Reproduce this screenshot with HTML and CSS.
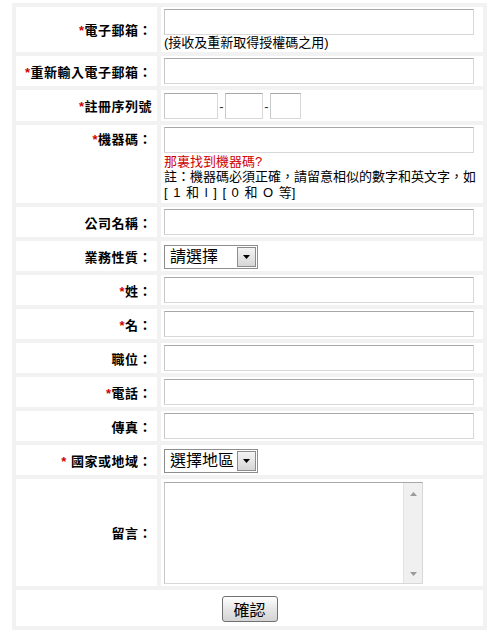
FILE: index.html
```html
<!DOCTYPE html>
<html lang="zh-Hant">
<head>
    <meta charset="UTF-8"/>
    <meta name="viewport" content="width=device-width, initial-scale=1.0"/>
    <title>註冊表格</title>
    <link rel="stylesheet" href="styles.css">
</head>
<body>
    <form id="regForm">
        <table class="form-table">
            <colgroup>
                <col class="col-label">
                <col class="col-field">
            </colgroup>
            <tr class="row-email">
                <td class="label"><span class="req">*</span>電子郵箱：</td>
                <td class="field">
                    <input type="text" class="txt">
                    <div class="hint">(接收及重新取得授權碼之用)</div>
                </td>
            </tr>
            <tr>
                <td class="label"><span class="req">*</span>重新輸入電子郵箱：</td>
                <td class="field"><input type="text" class="txt"></td>
            </tr>
            <tr class="row-serial">
                <td class="label"><span class="req">*</span>註冊序列號</td>
                <td class="field">
                    <div class="serial">
                        <input type="text" class="txt s1">
                        <span class="dash">-</span>
                        <input type="text" class="txt s2">
                        <span class="dash">-</span>
                        <input type="text" class="txt s3">
                    </div>
                </td>
            </tr>
            <tr class="row-machine">
                <td class="label top"><span class="req">*</span>機器碼：</td>
                <td class="field">
                    <input type="text" class="txt">
                    <div class="hint"><a href="#" class="help">那裏找到機器碼?</a></div>
                    <div class="hint note">註：機器碼必須正確，請留意相似的數字和英文字，如<br><span class="pairs">[ 1 和 l ] [ 0 和 O 等]</span></div>
                </td>
            </tr>
            <tr>
                <td class="label">公司名稱：</td>
                <td class="field"><input type="text" class="txt"></td>
            </tr>
            <tr>
                <td class="label">業務性質：</td>
                <td class="field">
                    <div class="dropdown">
                        <select>
                            <option>請選擇</option>
                        </select>
                        <span class="arrow"><svg width="7" height="4" viewBox="0 0 7 4"><path d="M0 0h7L3.5 4z" fill="#000"/></svg></span>
                    </div>
                </td>
            </tr>
            <tr>
                <td class="label"><span class="req">*</span>姓：</td>
                <td class="field"><input type="text" class="txt"></td>
            </tr>
            <tr>
                <td class="label"><span class="req">*</span>名：</td>
                <td class="field"><input type="text" class="txt"></td>
            </tr>
            <tr>
                <td class="label">職位：</td>
                <td class="field"><input type="text" class="txt"></td>
            </tr>
            <tr>
                <td class="label"><span class="req">*</span>電話：</td>
                <td class="field"><input type="text" class="txt"></td>
            </tr>
            <tr>
                <td class="label">傳真：</td>
                <td class="field"><input type="text" class="txt"></td>
            </tr>
            <tr>
                <td class="label"><span class="req">* </span>國家或地域：</td>
                <td class="field">
                    <div class="dropdown">
                        <select>
                            <option>選擇地區</option>
                        </select>
                        <span class="arrow"><svg width="7" height="4" viewBox="0 0 7 4"><path d="M0 0h7L3.5 4z" fill="#000"/></svg></span>
                    </div>
                </td>
            </tr>
            <tr class="row-memo">
                <td class="label">留言：</td>
                <td class="field">
                    <div class="memo">
                        <textarea></textarea>
                        <div class="scroll">
                            <svg width="7" height="4" viewBox="0 0 7 4"><path d="M0 4h7L3.5 0z" fill="#9a9a9a"/></svg>
                            <svg width="7" height="4" viewBox="0 0 7 4"><path d="M0 0h7L3.5 4z" fill="#9a9a9a"/></svg>
                        </div>
                    </div>
                </td>
            </tr>
            <tr class="row-submit">
                <td colspan="2" class="submit"><button type="submit">確認</button></td>
            </tr>
        </table>
    </form>
</body>
</html>
```

FILE: styles.css
```css
body {
    margin: 3px 0 0 12px;
    font-family: "Liberation Sans", "Noto Sans CJK TC", sans-serif;
    font-size: 13px;
    color: #000;
    background: #fff;
}
.form-table {
    width: 475px;
    table-layout: fixed;
    border-spacing: 4px;
    background: #f2f2f2;
}
.col-label {
    width: 141px;
}
.col-field {
    width: 322px;
}
.form-table td {
    background: #fff;
    padding: 2px 3px;
}
.label {
    text-align: right;
    vertical-align: middle;
    font-weight: bold;
    letter-spacing: 0.5px;
    padding: 4px 5px 1px 3px !important;
    white-space: nowrap;
    line-height: 16px;
}
.label.top {
    vertical-align: top;
    padding-top: 7px !important;
}
.req {
    color: #d00000;
}
.field {
    vertical-align: top;
    height: 26px;
}
.txt {
    display: block;
    width: 310px;
    height: 26px;
    box-sizing: border-box;
    border: 1px solid;
    border-color: #a8a8a8 #d8d8d8 #d8d8d8 #c8c8c8;
    margin: 0;
    padding: 2px 4px;
    font-family: inherit;
    font-size: 13px;
}
.row-serial .field {
    padding-top: 3px;
}
.serial {
    display: flex;
    align-items: center;
}
.serial .s1 {
    width: 54px;
}
.serial .s2 {
    width: 38px;
}
.serial .s3 {
    width: 31px;
}
.dash {
    width: 7px;
    text-align: center;
    color: #333;
}
.hint {
    line-height: 15px;
    white-space: nowrap;
}
.help {
    display: block;
    margin-top: 1px;
    color: #d00000;
    text-decoration: none;
}
.note {
    line-height: 16px;
}
.pairs {
    word-spacing: 2px;
}
.dropdown {
    position: relative;
    width: 94px;
    height: 24px;
    box-sizing: border-box;
    border: 1px solid #8e8e8e;
    margin-top: 2px;
    display: flex;
    align-items: center;
}
.dropdown select {
    appearance: none;
    -webkit-appearance: none;
    border: none;
    background: transparent;
    font-family: inherit;
    font-size: 16px;
    padding: 0 0 0 5px;
    width: 100%;
    height: 22px;
    line-height: 22px;
    color: #000;
    outline: none;
}
.dropdown .arrow {
    position: absolute;
    right: 1px;
    top: 1px;
    width: 17px;
    height: 18px;
    border: 1px solid #8c8c8c;
    background: linear-gradient(#f4f4f4, #d6d6d6);
    display: flex;
    align-items: center;
    justify-content: center;
    pointer-events: none;
}
.row-memo .field {
    padding-top: 3px;
}
.memo {
    display: flex;
    width: 259px;
    height: 102px;
    box-sizing: border-box;
    border: 1px solid;
    border-color: #a8a8a8 #d8d8d8 #d8d8d8 #c8c8c8;
}
.memo textarea {
    flex: 1;
    border: none;
    resize: none;
    outline: none;
    margin: 0;
    padding: 2px 4px;
    font-family: inherit;
    font-size: 13px;
}
.memo .scroll {
    width: 19px;
    background: #f0f0f0;
    border-left: 1px solid #e2e2e2;
    display: flex;
    flex-direction: column;
    justify-content: space-between;
    align-items: center;
    padding: 9px 0 7px;
    box-sizing: border-box;
}
.submit {
    text-align: center;
    height: 30px;
    padding-top: 4px !important;
}
.submit button {
    width: 56px;
    height: 26px;
    border: 1px solid #707070;
    border-radius: 3px;
    background: linear-gradient(#ffffff, #e6e6e6 50%, #d4d4d4);
    font-family: inherit;
    font-size: 16px;
    padding: 0;
    color: #000;
    cursor: pointer;
}
```
